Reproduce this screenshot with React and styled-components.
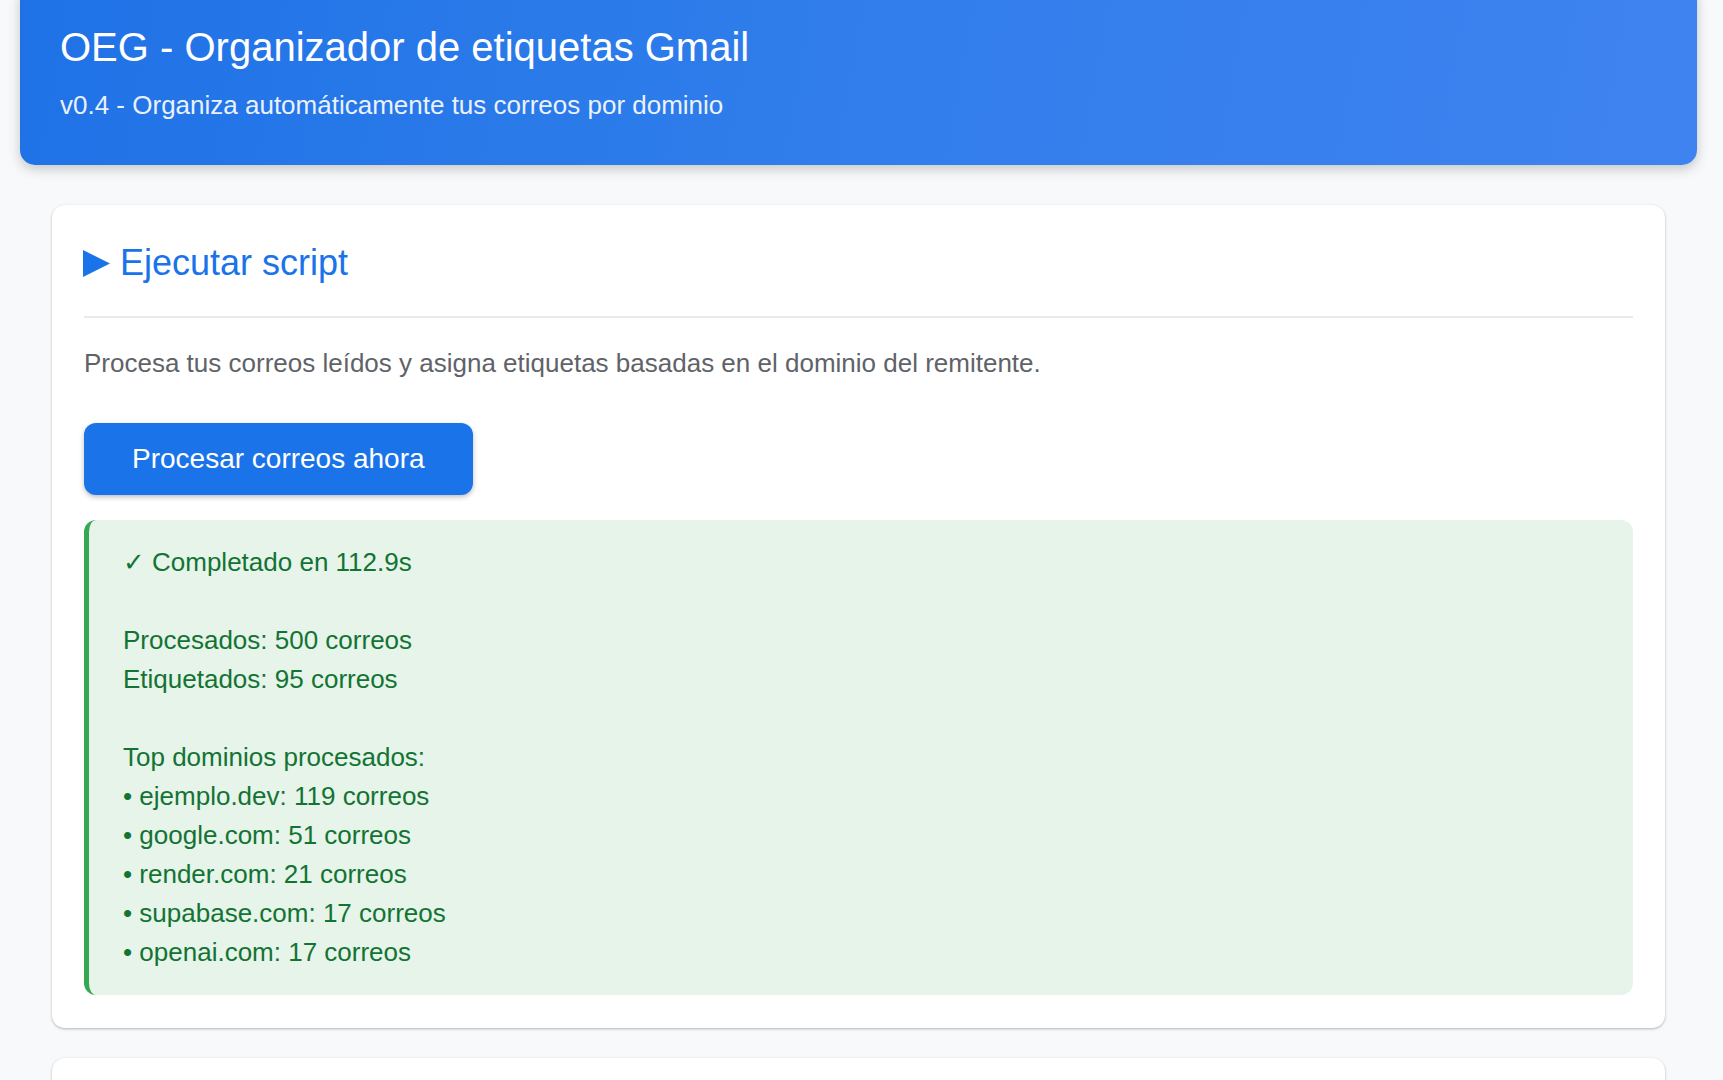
import React from "react";
import styled, { createGlobalStyle } from "styled-components";

const GlobalStyle = createGlobalStyle`
  html, body {
    margin: 0;
    padding: 0;
    background: #f8f9fa;
  }
  body {
    font-family: "Liberation Sans", Arial, "DejaVu Sans", sans-serif;
    overflow: hidden;
  }
  * { box-sizing: border-box; }
`;

const Page = styled.div`
  padding: 0 26px 40px 20px;
`;

const Header = styled.header`
  margin-top: -16px;
  padding: 40px 40px 45px;
  border-radius: 15px;
  background: linear-gradient(100deg, #1f72e6 0%, #2f7deb 45%, #3f83f0 100%);
  box-shadow: 0 4px 12px rgba(60, 64, 67, 0.28);
  color: #ffffff;
`;

const Title = styled.h1`
  margin: 0 0 20px;
  font-size: 40px;
  font-weight: 400;
  line-height: 46px;
`;

const Subtitle = styled.p`
  margin: 0;
  font-size: 26px;
  line-height: 30px;
  opacity: 0.9;
`;

const Main = styled.main`
  display: flex;
  flex-direction: column;
  gap: 30px;
  padding: 40px 32px 0;
`;

const Card = styled.section`
  background: #ffffff;
  border-radius: 13px;
  padding: 37px 32px 33px;
  box-shadow: 0 1px 3px rgba(60, 64, 67, 0.28), 0 1px 2px rgba(60, 64, 67, 0.12);
  min-height: ${(p) => (p.$tall ? "240px" : "auto")};
`;

const CardTitle = styled.h2`
  margin: 0;
  padding-bottom: 33px;
  border-bottom: 2px solid #e8eaed;
  color: #1a73e8;
  font-size: 36px;
  font-weight: 400;
  line-height: 41px;
  display: flex;
  align-items: center;
  gap: 10px;
`;

const PlayIcon = styled.svg`
  width: 27px;
  height: 27px;
  flex: none;
  margin: 2px 0 0 -1px;
`;

const Description = styled.p`
  margin: 30px 0 45px;
  color: #5f6368;
  font-size: 26px;
  line-height: 30px;
`;

const PrimaryButton = styled.button`
  display: block;
  border: none;
  border-radius: 12px;
  background: #1a73e8;
  color: #ffffff;
  font-family: inherit;
  font-size: 28px;
  line-height: 32px;
  padding: 20px 48px;
  cursor: pointer;
  box-shadow: 0 2px 5px rgba(60, 64, 67, 0.35);
`;

const Result = styled.div`
  margin-top: 25px;
  background: #e6f4ea;
  border-left: 5px solid #34a853;
  border-radius: 12px;
  padding: 23px 34px;
  color: #137333;
  font-size: 26px;
  line-height: 39px;
  white-space: pre-line;
`;

const resultText = `✓ Completado en 112.9s

Procesados: 500 correos
Etiquetados: 95 correos

Top dominios procesados:
• ejemplo.dev: 119 correos
• google.com: 51 correos
• render.com: 21 correos
• supabase.com: 17 correos
• openai.com: 17 correos`;

export default function App() {
  return (
    <>
      <GlobalStyle />
      <Page>
        <Header>
          <Title>OEG - Organizador de etiquetas Gmail</Title>
          <Subtitle>v0.4 - Organiza automáticamente tus correos por dominio</Subtitle>
        </Header>
        <Main>
          <Card>
            <CardTitle>
              <PlayIcon viewBox="0 0 27 27" aria-hidden="true">
                <polygon points="0,0 27,13.5 0,27" fill="#1a73e8" />
              </PlayIcon>
              <span>Ejecutar script</span>
            </CardTitle>
            <Description>
              Procesa tus correos leídos y asigna etiquetas basadas en el dominio del remitente.
            </Description>
            <PrimaryButton type="button">Procesar correos ahora</PrimaryButton>
            <Result>{resultText}</Result>
          </Card>
          <Card $tall />
        </Main>
      </Page>
    </>
  );
}
